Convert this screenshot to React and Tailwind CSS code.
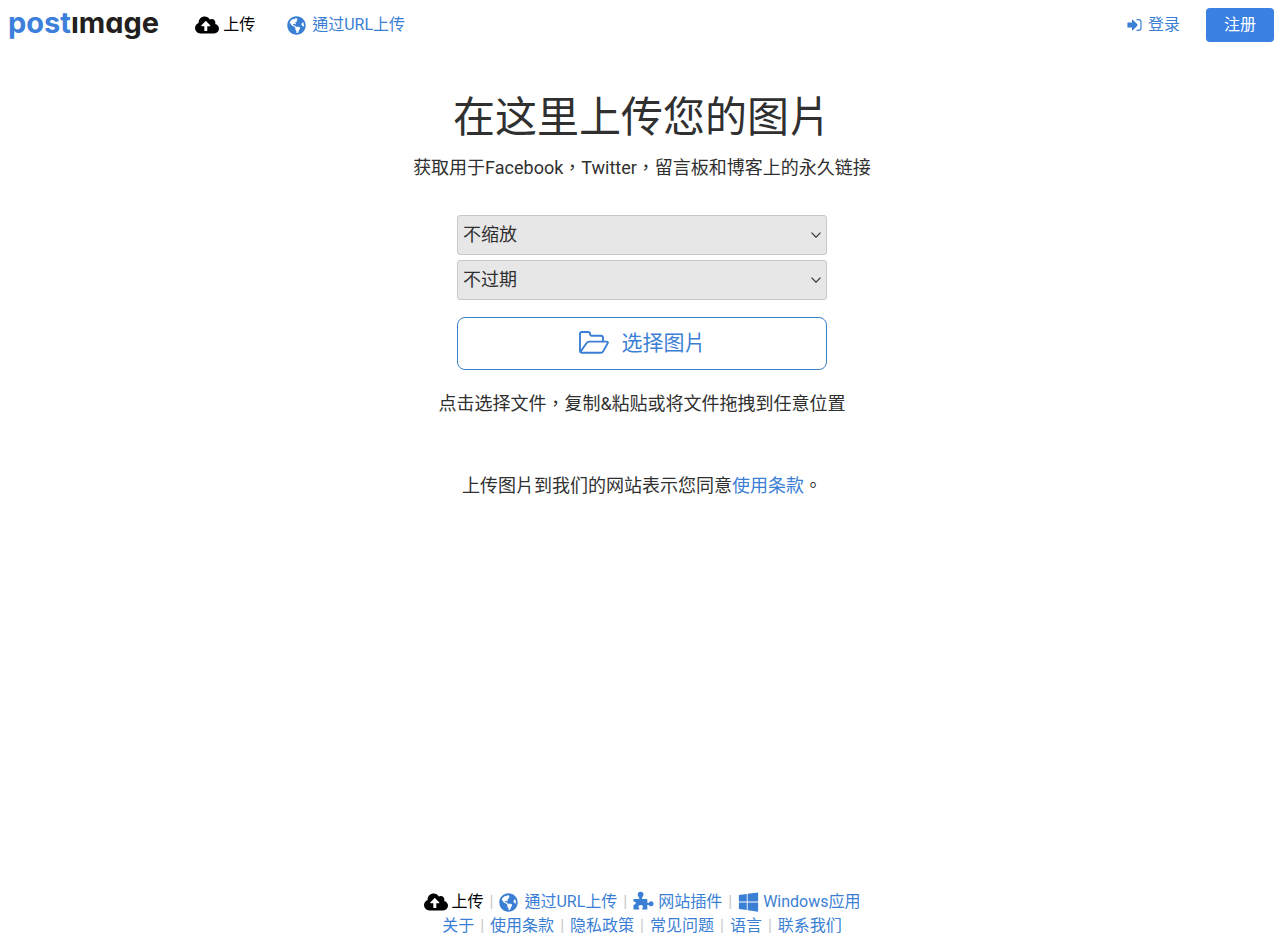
import { FaCloudUploadAlt, FaGlobeAmericas, FaWindows } from "react-icons/fa";

const link = "text-[#3b7fd4] hover:underline";

function UploadIcon() {
  return <FaCloudUploadAlt className="h-6 w-6 shrink-0" aria-hidden="true" />;
}

function GlobeIcon() {
  return <FaGlobeAmericas className="h-[19px] w-[19px]" aria-hidden="true" />;
}

function SignInIcon() {
  return (
    <svg viewBox="0 0 15 14" className="h-[14px] w-[15px]" fill="none" aria-hidden="true">
      <path d="M1 4.400h4V2.200Q5 1 6 1.900L10.300 6.300Q10.900 7 10.300 7.700L6 12.100Q5 13 5 11.800V9.600H1Q.4 9.600.4 9V5Q.4 4.400 1 4.400Z" fill="currentColor" />
      <path d="M9.500 1.700h2Q14 1.700 14 4v6q0 2.300-2.500 2.300h-2" stroke="currentColor" strokeWidth="1.200" />
    </svg>
  );
}

function FolderIcon() {
  return (
    <svg viewBox="0 0 30 23" className="h-[23px] w-[30px]" fill="none" stroke="currentColor" strokeWidth="1.900" strokeLinejoin="round" strokeLinecap="round" aria-hidden="true">
      <path d="M24 10.300V6.800Q24 4.700 21.900 4.700H12.500Q11.100 4.700 11.100 3.300V2.900Q11.100 1 9.200 1H3Q1 1 1 3V19.500Q1 21.800 3.200 21.800H21.500Q23 21.800 24 20.600L28.700 12.300Q29.400 10.600 27.500 10.600H10.500Q8.600 10.600 7.600 12L1.500 20.800" />
    </svg>
  );
}

function PuzzleIcon() {
  return (
    <svg viewBox="0 0 21 20" className="h-[22px] w-[21px]" preserveAspectRatio="xMidYMin" fill="currentColor" aria-hidden="true">
      <path d="M.5 8H5.500Q6.700 8 6.100 6.400Q4.700 5.300 4.700 3.600A2.900 2.900 0 0 1 10.500 3.600Q10.500 5.300 9.100 6.400Q8.600 8 9.800 8H14.300V11.300Q14.400 12.500 15.700 11.900Q16.500 10.200 18 10.200A2.500 2.500 0 0 1 18 15.200Q16.500 15.200 15.700 13.900Q14.400 13.300 14.300 14.500V18.600H9.700Q8.800 18.500 9.300 17.200Q10 16.500 10 15.500Q10 14 7.700 14Q5.400 14 5.400 15.500Q5.400 16.500 6.200 17.200Q6.600 18.500 5.700 18.600H.5V14Q.6 13.400 1.500 13.400Q2.700 13.700 2.700 12.100Q2.700 10.600 1.500 10.900Q.6 10.900.5 10.300Z" />
    </svg>
  );
}

function Choice({ label, options }) {
  return (
    <div className="relative">
      <select aria-label={label} className="block h-10 w-full appearance-none rounded-[3px] border border-[#c8c8c8] bg-[#e7e7e7] px-[5px] text-[18px] text-[#303030]">
        {options.map((o) => <option key={o}>{o}</option>)}
      </select>
      <svg viewBox="0 0 10 6" className="pointer-events-none absolute top-1/2 right-[6px] h-[6px] w-[10px] -translate-y-1/2" fill="none" stroke="#333" strokeWidth="1.200" aria-hidden="true">
        <path d="M.5.7 5 5.200 9.500.7" />
      </svg>
    </div>
  );
}

const pages = ["关于", "使用条款", "隐私政策", "常见问题", "语言", "联系我们"];

function Divider() {
  return <span className="px-[6px] text-[#c8c8c8]" aria-hidden="true">|</span>;
}

export default function App() {
  return (
    <div className="flex min-h-screen flex-col bg-white font-[Roboto,'Noto_Sans_CJK_TC',sans-serif] text-[#303030]" lang="zh-Hant">
      <header className="flex h-[50px] items-center justify-between pr-[6px] pl-2 text-base">
        <nav className="flex items-center">
          <a href="#" aria-label="postimage" className="pb-1 font-[Inter,sans-serif] text-[29px] leading-10 font-bold text-[#231f20] [font-feature-settings:'cv11']">
            <span className="text-[#3d80dc]">post</span>ımage
          </a>
          <a href="#" className="ml-9 flex items-center gap-1 text-black"><UploadIcon />上传</a>
          <a href="#" className={`${link} ml-8 flex items-center gap-[6px]`}><GlobeIcon />通过URL上传</a>
        </nav>
        <nav className="flex items-center gap-[26px]">
          <a href="#" className={`${link} flex items-center gap-[6px]`}><SignInIcon />登录</a>
          <a href="#" className="rounded bg-[#3b80e3] px-[18px] py-[5px] leading-6 text-white">注册</a>
        </nav>
      </header>

      <main className="flex flex-1 flex-col items-center pt-10 pr-4 pl-5 text-center text-[18px] leading-7">
        <h1 className="text-[42px] leading-[56px]">在这里上传您的图片</h1>
        <p className="mt-2">获取用于Facebook，Twitter，留言板和博客上的永久链接</p>
        <form className="mt-[33px] flex w-full max-w-[370px] flex-col gap-[5px]">
          <Choice label="调整图片大小" options={["不缩放"]} />
          <Choice label="过期时间" options={["不过期"]} />
          <button type="button" className="mt-3 flex h-[53px] items-center justify-center gap-[13px] rounded-lg border border-[#3b7fc4] pb-[2px] text-[21px] text-[#3b7fd4]">
            <FolderIcon />
            选择图片
          </button>
        </form>
        <p className="mt-5">点击选择文件，复制&amp;粘贴或将文件拖拽到任意位置</p>
        <p className="mt-[54px]">上传图片到我们的网站表示您同意<a href="#" className={link}>使用条款</a>。</p>
      </main>

      <footer className="pb-[6px] pl-1 text-center text-base leading-6">
        <div className="flex flex-wrap items-center justify-center">
          <a href="#" className="flex items-center gap-1 text-black"><UploadIcon />上传</a>
          <Divider />
          <a href="#" className={`${link} flex items-center gap-[6px]`}><GlobeIcon />通过URL上传</a>
          <Divider />
          <a href="#" className={`${link} flex items-center gap-1`}><PuzzleIcon />网站插件</a>
          <Divider />
          <a href="#" className={`${link} flex items-center gap-1`}><FaWindows className="h-[22px] w-[21px]" aria-hidden="true" />Windows应用</a>
        </div>
        <div className="flex flex-wrap items-center justify-center">
          {pages.map((p, i) => (
            <span key={p} className="flex">
              {i > 0 && <Divider />}
              <a href="#" className={link}>{p}</a>
            </span>
          ))}
        </div>
      </footer>
    </div>
  );
}
